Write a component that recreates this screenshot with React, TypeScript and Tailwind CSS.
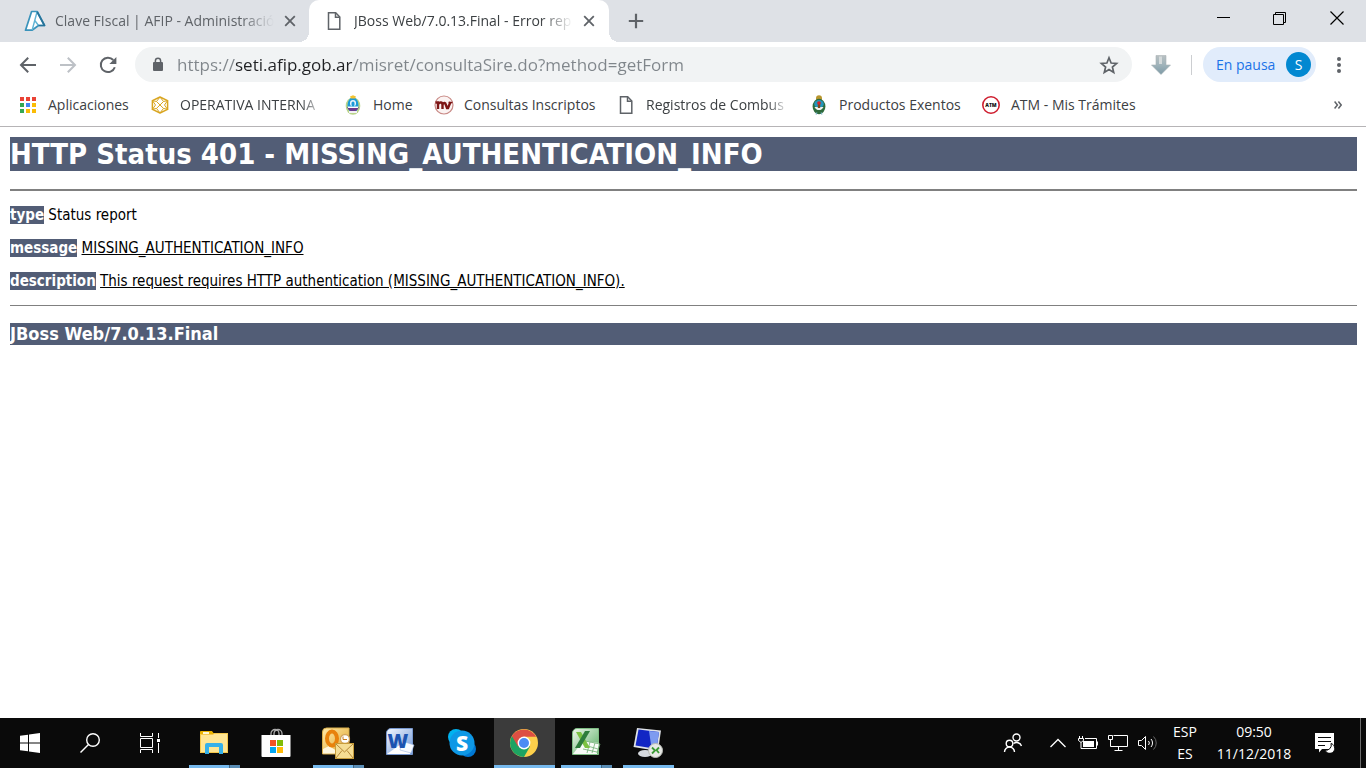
import { useState } from 'react';
import type { ReactNode } from 'react';

const PAGE_URL = 'https://seti.afip.gob.ar/misret/consultaSire.do?method=getForm';

/* ---------- Browser icons ---------- */

function AfipIcon() {
  return (
    <svg width="22" height="22" viewBox="0 0 22 22" fill="none" className="shrink-0">
      <path d="M7.600 1.500h5.600L20.500 15.500H14.500L8 20.200H1.500z" fill="#fff" stroke="#3a93bb" strokeWidth="1.700" strokeLinejoin="round" />
      <path d="M13 2 8.200 20M10.800 10.500 14.500 15.500" stroke="#5fb3d4" strokeWidth="1.400" />
      <path d="M13.200 2 20.500 15.500H14.500" stroke="#27739a" strokeWidth="1.700" strokeLinejoin="round" />
    </svg>
  );
}

function PageIcon() {
  return (
    <svg width="20" height="20" viewBox="0 0 20 20" fill="none" stroke="#5f6368" strokeWidth="1.5" className="shrink-0">
      <path d="M4.5 1.8h7.2l4.1 4.2v12.2H4.5z" />
      <path d="M11.5 2v4.3h4.2" />
    </svg>
  );
}

function CloseIcon() {
  return (
    <svg width="12" height="12" viewBox="0 0 12 12" stroke="#5f6368" strokeWidth="1.800">
      <path d="M1.2 1.2l9.6 9.6M10.8 1.2l-9.6 9.6" />
    </svg>
  );
}

function BackIcon() {
  return (
    <svg width="20" height="20" viewBox="0 0 20 20" fill="none" stroke="currentColor" strokeWidth="2">
      <path d="M18 10H3.5M10.2 2.8 3 10l7.2 7.2" />
    </svg>
  );
}

function ReloadIcon() {
  return (
    <svg width="20" height="20" viewBox="0 0 20 20" fill="none" className="text-[#5f6368]">
      <path d="M16.8 12.2A7.2 7.2 0 1 1 15.3 5" stroke="currentColor" strokeWidth="2" />
      <path d="M18.4 2v7h-7z" fill="currentColor" />
    </svg>
  );
}

function LockIcon() {
  return (
    <svg width="12" height="15" viewBox="0 0 12 15" className="shrink-0">
      <rect x="1" y="5" width="10" height="9" rx="1" fill="#5f6368" />
      <path d="M3.4 5.5V3.8a2.6 2.6 0 0 1 5.2 0v1.7" fill="none" stroke="#5f6368" strokeWidth="1.5" />
    </svg>
  );
}

function StarIcon() {
  return (
    <svg width="20" height="20" viewBox="0 0 20 20" fill="none" stroke="#5f6368" strokeWidth="1.7">
      <path d="M10 2.8l2.1 5.2 5.5.4-4.2 3.6 1.3 5.4-4.7-2.9-4.7 2.9L6.6 12 2.4 8.4l5.5-.4z" />
    </svg>
  );
}

function DownloadIcon() {
  return (
    <svg width="20" height="20" viewBox="0 0 20 20">
      <defs>
        <linearGradient id="arrow" x1="0" y1="0" x2="0" y2="1">
          <stop offset="0" stopColor="#b9c0c2" />
          <stop offset="0.5" stopColor="#9fb3ba" />
          <stop offset="1" stopColor="#7d9aa6" />
        </linearGradient>
      </defs>
      <path d="M5 .5h10V10h4.5L10 19.5.5 10H5z" fill="url(#arrow)" stroke="#a9b4b6" strokeWidth=".6" />
      <path d="M8 1.5h3V9H8z" fill="#d4dadb" />
    </svg>
  );
}

/* ---------- Bookmark icons ---------- */

const APP_DOTS = [
  ['#ea4335', '#ea4335', '#ea4335'],
  ['#34a853', '#4285f4', '#fbbc05'],
  ['#34a853', '#fbbc05', '#fbbc05'],
];

function AppsIcon() {
  return (
    <svg width="20" height="20" viewBox="0 0 20 20">
      {APP_DOTS.map((row, y) =>
        row.map((color, x) => <rect key={`${x}-${y}`} x={2 + x * 6} y={2 + y * 6} width="4" height="4" fill={color} />),
      )}
    </svg>
  );
}

function CubeIcon() {
  return (
    <svg width="20" height="20" viewBox="0 0 20 20" fill="none" stroke="#d9a520" strokeWidth="1.5" strokeLinejoin="round">
      <path d="M10 2l7.600 3.600v8.800L10 18l-7.600-3.600V5.600z" />
      <path d="M10 2 6.500 6.500l-4.100-.9L5.500 10l-3.100 4.400 4.100-1L10 18l3.500-4.600 4.100 1L14.500 10l3.100-4.400-4.100.9zM6.500 6.500l7 6.900M13.500 6.500l-7 6.900" strokeWidth="1" />
    </svg>
  );
}

function MendozaIcon() {
  return (
    <svg width="20" height="20" viewBox="0 0 20 20">
      <ellipse cx="10" cy="11" rx="7.300" ry="8.800" fill="#b9d48a" />
      <ellipse cx="10" cy="10" rx="5.500" ry="7.500" fill="#1b9bd8" />
      <path d="M4.200 12h11.600a6 6 0 0 1-11.600 0z" fill="#6a3a8c" />
      <path d="M5 11.500h10v1.500H5z" fill="#fff" />
      <rect x="7" y="5" width="6" height="6.500" rx="3" fill="#e8f4fb" />
      <rect x="8.500" y="6.500" width="3" height="5" rx="1.500" fill="#1b9bd8" />
      <path d="M7 1.500l3-1.300 3 1.300-1 2H8z" fill="#f2c230" />
      <path d="M6 16h8v2H6z" fill="#f4f1f6" />
    </svg>
  );
}

function NvIcon() {
  return (
    <svg width="20" height="20" viewBox="0 0 20 20" fill="none">
      <circle cx="10" cy="10" r="9" fill="#fbf3f2" stroke="#c98a86" strokeWidth="1.200" />
      <path d="M1.500 7.500H4V14M4 9.500C5.500 6.500 8.500 7 8.500 10v4M8.500 9.500c1.500-2.500 3-1.500 3.200 0l1.300 3.500h1L16.500 7" stroke="#7d1616" strokeWidth="2.400" />
      <path d="M14.500 7.500h4" stroke="#7d1616" strokeWidth="1.500" />
    </svg>
  );
}

function ArgentinaIcon() {
  return (
    <svg width="20" height="20" viewBox="0 0 20 20">
      <circle cx="10" cy="3.300" r="3" fill="#b8962e" />
      <ellipse cx="10" cy="11.500" rx="6.400" ry="7.800" fill="#2e6b3c" />
      <ellipse cx="10" cy="9" rx="4.800" ry="4" fill="#2496bd" />
      <path d="M5.500 12h9a5 5.500 0 0 1-9 0z" fill="#eef3ee" />
      <rect x="8.800" y="7" width="2.400" height="6" fill="#7a4a22" />
      <circle cx="10" cy="8" r="1.800" fill="#d8232a" />
      <path d="M8 17.500l-1 2M12 17.500l1 2" stroke="#7fb4c9" strokeWidth="1.200" />
    </svg>
  );
}

function AtmIcon() {
  return (
    <svg width="20" height="20" viewBox="0 0 20 20">
      <circle cx="10" cy="10" r="8.200" fill="#fff" stroke="#cf1f30" strokeWidth="1.600" />
      <text x="10" y="12" textAnchor="middle" fontFamily="Open Sans, sans-serif" fontWeight="800" fontSize="5" fill="#111">
        ATM
      </text>
    </svg>
  );
}

interface Bookmark {
  label: string;
  icon: ReactNode;
  width: string;
  faded?: boolean;
}

const BOOKMARKS: Bookmark[] = [
  { label: 'Aplicaciones', icon: <AppsIcon />, width: 'w-[82px]' },
  { label: 'OPERATIVA INTERNA', icon: <CubeIcon />, width: 'w-[143px]', faded: true },
  { label: 'Home', icon: <MendozaIcon />, width: 'w-[41px]' },
  { label: 'Consultas Inscriptos', icon: <NvIcon />, width: 'w-[132px]' },
  { label: 'Registros de Combus', icon: <PageIcon />, width: 'w-[143px]', faded: true },
  { label: 'Productos Exentos', icon: <ArgentinaIcon />, width: 'w-[122px]' },
  { label: 'ATM - Mis Trámites', icon: <AtmIcon />, width: 'w-[128px]' },
];

const FADE = '[mask-image:linear-gradient(to_right,#000_85%,transparent)]';

/* ---------- Taskbar icons ---------- */

function WindowsIcon() {
  return (
    <svg width="20" height="20" viewBox="0 0 20 20" fill="#fff">
      <path d="M0 2.800 8 1.700v7.800H0zM9 1.500 20 0v9.500H9zM0 10.500h8v7.800L0 17.200zM9 10.500h11V20L9 18.500z" />
    </svg>
  );
}

function SearchIcon() {
  return (
    <svg width="20" height="20" viewBox="0 0 20 20" fill="none" stroke="#fff" strokeWidth="1.400">
      <circle cx="13" cy="7" r="6.300" />
      <path d="M8.500 11.500 0.500 19.500" />
    </svg>
  );
}

function TaskViewIcon() {
  return (
    <svg width="20" height="20" viewBox="0 0 20 20" fill="none" stroke="#fff">
      <path d="M.5 0v3.500h12V0M.5 20v-3.500h12V20M.5 5.500h12v9H.5zM18.500 0v5M18.500 10v10" />
      <rect x="17" y="6" width="3" height="3" fill="#fff" stroke="none" />
    </svg>
  );
}

function ExplorerIcon() {
  return (
    <svg width="30" height="30" viewBox="0 0 30 30">
      <path d="M1 4h12l1.500 1H29v20H1z" fill="#f5c84c" />
      <path d="M1 4a1 1 0 0 1 1-1h11l2 3H1z" fill="#eab300" />
      <rect x="4" y="4" width="6" height="2" fill="#fff8d8" />
      <path d="M2 7h12l1-1h13v18H2z" fill="#ffe694" />
      <path d="M6 26V17a2 2 0 0 1 2-2h14a2 2 0 0 1 2 2v9h-4v-7H10v7z" fill="#35b1ea" />
    </svg>
  );
}

function StoreIcon() {
  return (
    <svg width="30" height="30" viewBox="0 0 30 30">
      <path d="M10 8V5.500a4 4 0 0 1 8 0V8M13 8V5.500a4 4 0 0 1 8 0V8" fill="none" stroke="#aaa" strokeWidth="1.300" />
      <path d="M0.500 7h29v21a1 1 0 0 1-1 1h-27a1 1 0 0 1-1-1z" fill="#fff" />
      <path d="M9 12h6v6H9z" fill="#f35325" />
      <path d="M16 12h6v6h-6z" fill="#81bc06" />
      <path d="M9 19h6v6H9z" fill="#05a6f0" />
      <path d="M16 19h6v6h-6z" fill="#ffba08" />
    </svg>
  );
}

function OutlookIcon() {
  return (
    <svg width="34" height="34" viewBox="0 0 34 34">
      <defs>
        <linearGradient id="outlook" x1="0" y1="0" x2="1" y2="1">
          <stop offset="0" stopColor="#ffe9a8" />
          <stop offset="1" stopColor="#e0a52c" />
        </linearGradient>
      </defs>
      <path d="M1.500 6a4 4 0 0 1 4-4H28v26H1.500z" fill="url(#outlook)" stroke="#d9ae4a" />
      <path d="M2 27.500V23l6-3 12 7.500z" fill="#fff7df" />
      <ellipse cx="11" cy="12.500" rx="5" ry="7" fill="none" stroke="#e8820c" strokeWidth="4" />
      <circle cx="24" cy="13" r="4.500" fill="#fff" stroke="#d3a45a" strokeWidth="1.300" />
      <path d="M22 10.500v3h4" stroke="#c77b1c" fill="none" />
      <rect x="14.500" y="17.500" width="18" height="15" fill="#f5dd93" stroke="#c79d3c" />
      <path d="M15 18 23.500 26 32 18M15 32 21 24.500M32 32 26 24.500" fill="none" stroke="#b5893a" />
    </svg>
  );
}

function WordIcon() {
  return (
    <svg width="30" height="30" viewBox="0 0 30 30">
      <defs>
        <linearGradient id="word" x1="0" y1="0" x2="1" y2="1">
          <stop offset="0" stopColor="#f4f8fe" />
          <stop offset="1" stopColor="#6f97d8" />
        </linearGradient>
      </defs>
      <path d="M1.500 5a4.500 4.500 0 0 1 4.500-4.500h21.500v26h-26z" fill="url(#word)" stroke="#7898cf" />
      <path d="M2 26 16 16l12 3-3 7z" fill="#fff" />
      <path d="M17 13l12 4-3 8-11-3z" fill="#f7faff" stroke="#9db5dd" strokeWidth=".6" />
      <text x="13" y="20" textAnchor="middle" fontFamily="Open Sans, sans-serif" fontWeight="800" fontSize="20" fill="#1c53b0">
        W
      </text>
    </svg>
  );
}

function SkypeIcon() {
  return (
    <svg width="30" height="30" viewBox="0 0 30 30">
      <circle cx="9" cy="9" r="8" fill="#00b2f0" />
      <circle cx="21" cy="21" r="8" fill="#0078d4" />
      <circle cx="15" cy="15" r="12.500" fill="#0e98e6" />
      <text x="15" y="22.500" textAnchor="middle" fontFamily="Open Sans, sans-serif" fontWeight="800" fontSize="21" fill="#fff">
        S
      </text>
    </svg>
  );
}

function ChromeIcon() {
  return (
    <svg width="28" height="28" viewBox="0 0 28 28">
      <circle cx="14" cy="14" r="14" fill="#fdd04b" />
      <path d="M14 14 1.900 7A14 14 0 0 0 14 28l6-10.500z" fill="#1da362" />
      <path d="M14 14 8 17.500 1.900 7A14 14 0 0 1 26.100 7.700H14z" fill="#dd4f43" />
      <circle cx="14" cy="14" r="6.400" fill="#fff" />
      <circle cx="14" cy="14" r="5" fill="#4b8bf4" />
    </svg>
  );
}

function ExcelIcon() {
  return (
    <svg width="30" height="30" viewBox="0 0 30 30">
      <defs>
        <linearGradient id="excel" x1="0" y1="0" x2="1" y2="1">
          <stop offset="0" stopColor="#f0f8ee" />
          <stop offset="1" stopColor="#58ad62" />
        </linearGradient>
      </defs>
      <path d="M1.500 5a4.500 4.500 0 0 1 4.500-4.500h21.500v26H1.500z" fill="url(#excel)" stroke="#7fbd84" />
      <path d="M2 26 12 13l16 2-2 11H2z" fill="#f8fbf7" />
      <path d="M14 13l15 3-3 9M13 17l14 4M12 21l14 3M19 14l-3 11M24 15l-3 10" stroke="#6fae72" strokeWidth=".8" fill="none" />
      <path d="M5 4h5l9 16h-5z" fill="#7cc243" />
      <path d="M14 3h5L9 20H4z" fill="#2e7d3c" />
    </svg>
  );
}

function RemoteDesktopIcon() {
  return (
    <svg width="32" height="32" viewBox="0 0 32 32">
      <ellipse cx="13" cy="26.500" rx="7" ry="3.500" fill="#d5d9de" />
      <path d="M5 1 29 3.500 26 24 1.500 20z" fill="#dfe3e8" />
      <path d="M6.500 2.500 27 5 24.500 22 3.500 18.500z" fill="#1226c4" />
      <path d="M17 4l10 1-2.500 17-5-.8z" fill="#7d9bf0" />
      <circle cx="23.500" cy="23.500" r="7" fill="#e8e9e6" stroke="#b8bab5" />
      <path d="M20 20.500l3 3-3 3M27 20.500l-2.500 2.500 2.500 3" fill="none" stroke="#3c9a35" strokeWidth="1.800" />
    </svg>
  );
}

function PeopleIcon() {
  return (
    <svg width="20" height="20" viewBox="0 0 20 20" fill="none" stroke="#fff" strokeWidth="1.400">
      <circle cx="13.500" cy="4.500" r="3.500" />
      <circle cx="6.500" cy="10.500" r="3.300" />
      <path d="M1.500 19a5 5 0 0 1 10 0M10.500 10.500A5.200 5.200 0 0 1 18.500 13" />
    </svg>
  );
}

function ChevronIcon() {
  return (
    <svg width="20" height="20" viewBox="0 0 20 20" fill="none" stroke="#fff" strokeWidth="1.300">
      <path d="M2.500 14 10 6.500l7.500 7.500" />
    </svg>
  );
}

function BatteryIcon() {
  return (
    <svg width="20" height="20" viewBox="0 0 20 20" fill="none" stroke="#fff">
      <path d="M1.500 3v2M4.500 3v2M.5 5.500h5v2L3.500 9h-1L.5 7.500zM3 9v6.500h15.500v-10H7M19.500 8.500v4" />
      <path d="M5 8h11v6H5z" fill="#fff" stroke="none" />
    </svg>
  );
}

function NetworkIcon() {
  return (
    <svg width="20" height="20" viewBox="0 0 20 20" fill="none" stroke="#fff">
      <path d="M5.500 2.500h14v11h-17V8M10.500 13.500v4M6.500 17.500h8" />
      <path d="M.5 2.500h4v4h-4zM2.500 6.500v2" />
    </svg>
  );
}

function VolumeIcon() {
  return (
    <svg width="20" height="20" viewBox="0 0 20 20" fill="none" stroke="#fff">
      <path d="M.5 7.500h3l4-4v13l-4-4h-3zM10.500 8a3 3 0 0 1 0 4M13 6a6 6 0 0 1 0 8" />
      <path d="M15.500 3.500a9 9 0 0 1 0 13" stroke="#666" />
    </svg>
  );
}

function ActionCenterIcon() {
  return (
    <svg width="22" height="20" viewBox="0 0 22 20">
      <path d="M1 0h19v16H8l-3 3.500V16H1z" fill="#fff" />
      <path d="M4 4.500h13M4 8.500h13M4 12.500h7" stroke="#0b0b0b" strokeWidth="1.200" />
      <path d="M17 10.500a5 5 0 1 1-6 6.500 5 5 0 0 0 6-6.500z" fill="#fff" stroke="#0b0b0b" />
    </svg>
  );
}

interface TaskbarApp {
  name: string;
  icon: ReactNode;
  state?: 'open' | 'grouped' | 'active';
}

const TASKBAR_APPS: TaskbarApp[] = [
  { name: 'Explorador de archivos', icon: <ExplorerIcon />, state: 'grouped' },
  { name: 'Microsoft Store', icon: <StoreIcon /> },
  { name: 'Outlook', icon: <OutlookIcon />, state: 'grouped' },
  { name: 'Word', icon: <WordIcon /> },
  { name: 'Skype', icon: <SkypeIcon /> },
  { name: 'Google Chrome', icon: <ChromeIcon />, state: 'active' },
  { name: 'Excel', icon: <ExcelIcon />, state: 'grouped' },
  { name: 'Escritorio remoto', icon: <RemoteDesktopIcon />, state: 'open' },
];

/* ---------- Sections ---------- */

function TabStrip() {
  return (
    <div className="flex h-[42px] bg-[#dee1e6]">
      <div className="flex w-[309px] items-center pr-3 pl-6">
        <AfipIcon />
        <span className={`ml-[9px] w-[219px] text-sm whitespace-nowrap text-[#5f6368] ${FADE}`}>
          Clave FIscal | AFIP - Administració
        </span>
        <button aria-label="Cerrar" className="ml-[10px]">
          <CloseIcon />
        </button>
      </div>
      <div className="relative flex w-[300px] items-center rounded-t-[10px] bg-white pr-3 pl-[15px]">
        {/* Flared bottom corners */}
        <span className="absolute bottom-0 -left-[10px] size-[10px] bg-[radial-gradient(circle_at_0_0,transparent_10px,#fff_10px)]" />
        <span className="absolute -right-[10px] bottom-0 size-[10px] bg-[radial-gradient(circle_at_100%_0,transparent_10px,#fff_10px)]" />
        <PageIcon />
        <span className={`ml-[10px] w-[219px] text-sm whitespace-nowrap text-[#3c4043] ${FADE}`}>
          JBoss Web/7.0.13.Final - Error rep
        </span>
        <button aria-label="Cerrar" className="ml-[10px]">
          <CloseIcon />
        </button>
      </div>
      <button aria-label="Nueva pestaña" className="ml-[19px] flex items-center">
        <svg width="16" height="16" viewBox="0 0 16 16" stroke="#5f6368" strokeWidth="2.200">
          <path d="M8 .8v14.400M.8 8h14.400" />
        </svg>
      </button>
      <div className="ml-auto flex h-9 text-black">
        <button aria-label="Minimizar" className="flex w-14 items-center justify-center">
          <svg width="14" height="14" viewBox="0 0 14 14" stroke="currentColor">
            <path d="M0 6.500h13" />
          </svg>
        </button>
        <button aria-label="Restaurar" className="flex w-14 items-center justify-center">
          <svg width="14" height="14" viewBox="0 0 14 14" fill="none" stroke="currentColor">
            <path d="M.5 3.500h10v10H.5zM2.500 3.500v-2h10v10h-2" />
          </svg>
        </button>
        <button aria-label="Cerrar ventana" className="flex w-[58px] items-center justify-center">
          <svg width="14" height="14" viewBox="0 0 14 14" stroke="currentColor" strokeWidth="1.200">
            <path d="M.5.5l13 13M13.500.5l-13 13" />
          </svg>
        </button>
      </div>
    </div>
  );
}

function Toolbar() {
  const [url, setUrl] = useState(PAGE_URL);

  return (
    <div className="flex h-[45px] items-center pr-[18px] pl-[18px]">
      <div className="flex gap-5 text-[#5f6368]">
        <button aria-label="Atrás">
          <BackIcon />
        </button>
        <button aria-label="Adelante" className="rotate-180 text-[#bdc1c6]">
          <BackIcon />
        </button>
        <button aria-label="Volver a cargar">
          <ReloadIcon />
        </button>
      </div>
      <div className="ml-[17px] flex h-[35px] flex-1 items-center rounded-full bg-[#f1f3f4] pr-[13px] pl-[17px]">
        <LockIcon />
        {/* The host is darker than the rest of the address */}
        <input
          aria-label="Dirección"
          value={url}
          onChange={(e) => setUrl(e.target.value)}
          className="ml-[13px] min-w-0 flex-1 bg-[linear-gradient(to_right,#80868b_58px,#202124_58px,#202124_176px,#80868b_176px)] bg-clip-text text-[17px] text-transparent outline-none"
        />
        <button aria-label="Agregar a marcadores">
          <StarIcon />
        </button>
      </div>
      <button aria-label="Descargas" className="ml-[19px]">
        <DownloadIcon />
      </button>
      <span className="ml-5 h-5 w-px bg-[#ccced1]" />
      <button className="ml-[11px] flex h-[35px] items-center rounded-full bg-[#e1ecfb] pr-[5px] pl-[13px] text-sm text-[#1a73e8]">
        <span className="w-[60px] text-left whitespace-nowrap">En pausa</span>
        <span className="ml-[10px] flex size-[25px] items-center justify-center rounded-full bg-[#0288d1] text-white">S</span>
      </button>
      <button aria-label="Menú" className="ml-[16px]">
        <svg width="16" height="20" viewBox="0 0 16 20" fill="#5f6368">
          <circle cx="7" cy="4" r="2" />
          <circle cx="7" cy="10" r="2" />
          <circle cx="7" cy="16" r="2" />
        </svg>
      </button>
    </div>
  );
}

function BookmarksBar() {
  return (
    <nav className="flex h-10 items-center gap-5 border-b border-[#b6b4b6] pb-[3px] pr-6 pl-[18px] text-sm text-[#3c4043]">
      {BOOKMARKS.map((item) => (
        <a key={item.label} href="#" className="flex shrink-0 items-center gap-[10px]">
          {item.icon}
          <span className={`whitespace-nowrap ${item.width} ${item.faded ? FADE : ''}`}>{item.label}</span>
        </a>
      ))}
      <button aria-label="Más marcadores" className="ml-auto">
        <svg width="8" height="10" viewBox="0 0 8 10" fill="none" stroke="#5f6368" strokeWidth="1.500">
          <path d="M.6 1.500 3.400 5 .6 8.500M4.400 1.500 7.200 5 4.400 8.500" />
        </svg>
      </button>
    </nav>
  );
}

const LABEL = 'inline-block h-[18px] bg-[#525d76] font-bold text-white';

function ErrorPage() {
  return (
    <main className="flex-1 pt-[10px] pr-[9px] pl-[10px] font-['DejaVu_Sans_Condensed','DejaVu_Sans',sans-serif] text-[15px] leading-[18px] text-black">
      <h1 className="bg-[#525d76] text-[29px] leading-[34px] font-bold text-white">HTTP Status 401 - MISSING_AUTHENTICATION_INFO</h1>
      <hr className="mt-[18px] border-t-2 border-[#808080]" />
      <p className="mt-[15px]">
        <b className={LABEL}>type</b> Status report
      </p>
      <p className="mt-[15px]">
        <b className={LABEL}>message</b> <u>MISSING_AUTHENTICATION_INFO</u>
      </p>
      <p className="mt-[15px]">
        <b className={LABEL}>description</b> <u>This request requires HTTP authentication (MISSING_AUTHENTICATION_INFO).</u>
      </p>
      <hr className="mt-[15px] border-t border-[#808080]" />
      <h3 className="mt-[17px] bg-[#525d76] text-lg leading-[22px] font-bold text-white">JBoss Web/7.0.13.Final</h3>
    </main>
  );
}

function TaskbarButton({ app }: { app: TaskbarApp }) {
  return (
    <button
      aria-label={app.name}
      className={`relative flex w-[61px] items-center justify-center pr-[2px] ${app.state === 'active' ? 'bg-[#3b3b3b]' : ''}`}
    >
      {app.icon}
      {app.state === 'active' && <span className="absolute inset-x-0 bottom-0 h-[3px] bg-[#76b9ed]" />}
      {app.state === 'open' && <span className="absolute inset-x-[5px] bottom-0 h-[3px] bg-[#76b9ed]" />}
      {app.state === 'grouped' && (
        <span className="absolute inset-x-[5px] bottom-0 flex h-[3px]">
          <span className="flex-1 bg-[#76b9ed]" />
          <span className="w-[11px] border-l border-[#3f6482] bg-[#5a8db5]" />
        </span>
      )}
    </button>
  );
}

function Taskbar() {
  return (
    <footer className="flex h-[50px] bg-[#0a0a0a] text-sm text-white">
      <button aria-label="Inicio" className="flex w-[60px] items-center justify-center">
        <WindowsIcon />
      </button>
      <button aria-label="Buscar" className="flex w-[60px] items-center justify-center">
        <SearchIcon />
      </button>
      <button aria-label="Vista de tareas" className="flex w-[60px] items-center justify-center">
        <TaskViewIcon />
      </button>
      <div className="ml-1 flex gap-px">
        {TASKBAR_APPS.map((app) => (
          <TaskbarButton key={app.name} app={app} />
        ))}
      </div>
      <div className="ml-auto flex items-center">
        <button aria-label="Contactos" className="mr-[25px]">
          <PeopleIcon />
        </button>
        <div className="flex gap-[10px]">
          <button aria-label="Mostrar iconos ocultos">
            <ChevronIcon />
          </button>
          <button aria-label="Batería">
            <BatteryIcon />
          </button>
          <button aria-label="Red">
            <NetworkIcon />
          </button>
          <button aria-label="Volumen">
            <VolumeIcon />
          </button>
        </div>
        <button className="ml-3 w-[30px] text-center leading-[22px]">
          ESP
          <br />
          ES
        </button>
        <button className="ml-[14px] w-20 text-center leading-[22px] whitespace-nowrap">
          09:50
          <br />
          11/12/2018
        </button>
        <button aria-label="Centro de actividades" className="ml-5">
          <ActionCenterIcon />
        </button>
        <span className="ml-6 h-[50px] w-[6px] border-l border-[#6b6b6b]" />
      </div>
    </footer>
  );
}

export default function App() {
  return (
    <div className="flex min-h-screen flex-col bg-white font-['Open_Sans','Noto_Sans',sans-serif]">
      <header>
        <TabStrip />
        <Toolbar />
        <BookmarksBar />
      </header>
      <ErrorPage />
      <Taskbar />
    </div>
  );
}
